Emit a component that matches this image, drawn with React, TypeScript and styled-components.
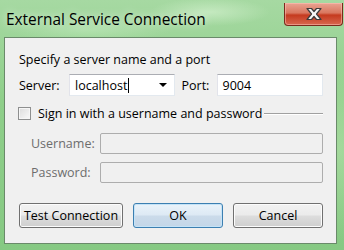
import React from 'react';
import styled, { createGlobalStyle } from 'styled-components';

const Global = createGlobalStyle`
  html, body {
    margin: 0;
    padding: 0;
    width: 344px;
    height: 250px;
    overflow: hidden;
  }
  body {
    font-family: 'Open Sans', 'Noto Sans', sans-serif;
    font-size: 12.5px;
    color: #000;
  }
`;

const Frame = styled.div`
  width: 344px;
  height: 250px;
  box-sizing: border-box;
  display: flex;
  flex-direction: column;
  padding: 0 7px 6px 4px;
  background:
    radial-gradient(ellipse 60px 14px at 210px 12px, rgba(210, 240, 205, 0.7), transparent),
    radial-gradient(ellipse 80px 12px at 90px 30px, rgba(190, 232, 185, 0.6), transparent),
    radial-gradient(ellipse 40px 90px at 340px 150px, rgba(180, 225, 170, 0.6), transparent),
    linear-gradient(180deg, #a6d9a2 0%, #8fcf8a 40%, #86c983 100%);
`;

const TitleBar = styled.div`
  height: 37px;
  display: flex;
  align-items: flex-start;
  justify-content: space-between;
`;

const Title = styled.div`
  font-family: 'Open Sans', 'Noto Sans', sans-serif;
  font-size: 15.4px;
  line-height: 20px;
  margin: 10px 0 0 2px;
  color: #000;
  text-shadow: 0 0 8px rgba(255, 255, 255, 0.9);
`;

const CloseButton = styled.div`
  width: 59px;
  height: 23px;
  margin-top: 3px;
  margin-right: -6px;
  box-sizing: border-box;
  border: 1px solid #7a2a1c;
  border-top: none;
  border-radius: 0 0 4px 4px;
  background: linear-gradient(180deg, #e9a493 0%, #d9775f 45%, #c53a1f 55%, #d8684f 100%);
  box-shadow: inset 0 0 0 1px rgba(255, 200, 190, 0.5);
  display: flex;
  align-items: center;
  justify-content: center;
`;

const Client = styled.div`
  flex: 1;
  box-sizing: border-box;
  border: 1px solid #6a8a6a;
  background: #f0f0f0;
  padding: 14px 13px 0 13px;
  display: flex;
  flex-direction: column;
`;

const Heading = styled.div`
  line-height: 16px;
  margin-left: 1px;
`;

const Row = styled.div<{ $top: number; $indent?: number }>`
  display: flex;
  align-items: center;
  margin-top: ${p => p.$top}px;
  padding-left: ${p => p.$indent ?? 0}px;
`;

const Label = styled.label<{ $width: number; $disabled?: boolean }>`
  width: ${p => p.$width}px;
  flex: none;
  padding-left: 1px;
  color: ${p => (p.$disabled ? '#6d6d6d' : '#000')};
`;

const Combo = styled.div`
  width: 107px;
  height: 22px;
  box-sizing: border-box;
  border: 1px solid #abadb3;
  border-color: #abadb3 #e3e9ef #e3e9ef #e2e3ea;
  background: #fff;
  display: flex;
  align-items: center;
  padding-left: 5px;
  position: relative;
`;

const Caret = styled.span`
  display: inline-block;
  width: 1px;
  height: 15px;
  background: #000;
  margin-left: 1px;
`;

const Arrow = styled.span`
  position: absolute;
  right: 7px;
  top: 8px;
  width: 0;
  height: 0;
  border-left: 4px solid transparent;
  border-right: 4px solid transparent;
  border-top: 4px solid #000;
`;

const TextBox = styled.div<{ $width: number; $disabled?: boolean }>`
  width: ${p => p.$width}px;
  height: ${p => (p.$disabled ? 21 : 22)}px;
  box-sizing: border-box;
  border: 1px solid ${p => (p.$disabled ? '#adadad' : '#abadb3')};
  ${p => (p.$disabled ? '' : 'border-color: #abadb3 #e3e9ef #e3e9ef #e2e3ea;')}
  border-radius: ${p => (p.$disabled ? 2 : 0)}px;
  background: ${p => (p.$disabled ? '#f0f0f0' : '#fff')};
  display: flex;
  align-items: center;
  padding-left: 5px;
`;

const Check = styled.span`
  width: 13px;
  height: 13px;
  box-sizing: border-box;
  border: 1px solid #8e8f8f;
  background: linear-gradient(135deg, #dcdcdc 0%, #f4f4f4 80%);
  box-shadow: inset 0 0 0 1px #f6f6f6;
  flex: none;
  margin-right: 7px;
`;

const GroupLine = styled.span`
  flex: 1;
  height: 0;
  border-top: 1px solid #a0a0a0;
  border-bottom: 1px solid #ffffff;
  margin-left: 2px;
`;

const Buttons = styled.div`
  display: flex;
  gap: 10px;
  margin-top: 20px;
  padding-left: 1px;
`;

const Button = styled.div<{ $width: number; $default?: boolean }>`
  width: ${p => p.$width}px;
  height: 25px;
  box-sizing: border-box;
  border: 1px solid ${p => (p.$default ? '#3c7fb1' : '#707070')};
  border-radius: 3px;
  background: ${p =>
    p.$default
      ? 'linear-gradient(180deg, #eaf3fa 0%, #dde9f4 49%, #cbdbea 51%, #c3d6e8 100%)'
      : 'linear-gradient(180deg, #f2f2f2 0%, #ebebeb 49%, #dddddd 51%, #cfcfcf 100%)'};
  box-shadow: inset 0 0 0 1px ${p => (p.$default ? '#c5e3f7' : '#fcfcfc')};
  display: flex;
  align-items: center;
  justify-content: center;
`;

function CloseGlyph() {
  return (
    <svg width="20" height="14" viewBox="0 0 20 14">
      <path
        d="M3 1.5 H7.5 L10 4.5 L12.5 1.5 H17 L12.5 7 L17 12.5 H12.5 L10 9.5 L7.5 12.5 H3 L7.5 7 Z"
        fill="#f6f6f6"
        stroke="#3c3c3c"
        strokeWidth="1.2"
        strokeLinejoin="round"
      />
    </svg>
  );
}

export default function App() {
  return (
    <>
      <Global />
      <Frame>
        <TitleBar>
          <Title>External Service Connection</Title>
          <CloseButton>
            <CloseGlyph />
          </CloseButton>
        </TitleBar>
        <Client>
          <Heading>Specify a server name and a port</Heading>
          <Row $top={6}>
            <Label $width={50}>Server:</Label>
            <Combo>
              localhost
              <Caret />
              <Arrow />
            </Combo>
            <Label $width={35} style={{ marginLeft: 6 }}>Port:</Label>
            <TextBox $width={108}>9004</TextBox>
          </Row>
          <Row $top={9}>
            <Check />
            Sign in with a username and password
            <GroupLine />
          </Row>
          <Row $top={11} $indent={12}>
            <Label $width={69} $disabled>Username:</Label>
            <TextBox $width={224} $disabled />
          </Row>
          <Row $top={8} $indent={12}>
            <Label $width={69} $disabled>Password:</Label>
            <TextBox $width={224} $disabled />
          </Row>
          <Buttons>
            <Button $width={104}>Test Connection</Button>
            <Button $width={90} $default>OK</Button>
            <Button $width={90}>Cancel</Button>
          </Buttons>
        </Client>
      </Frame>
    </>
  );
}
